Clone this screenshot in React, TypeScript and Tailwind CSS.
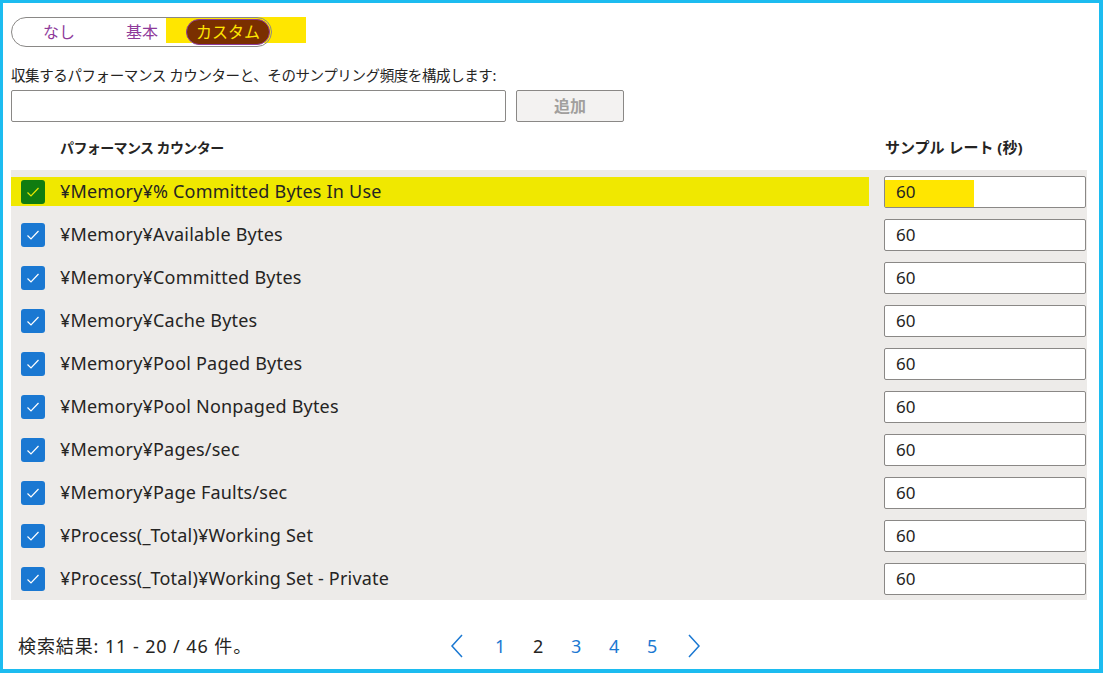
import { useState } from 'react';

const counters = [
  '¥Memory¥% Committed Bytes In Use',
  '¥Memory¥Available Bytes',
  '¥Memory¥Committed Bytes',
  '¥Memory¥Cache Bytes',
  '¥Memory¥Pool Paged Bytes',
  '¥Memory¥Pool Nonpaged Bytes',
  '¥Memory¥Pages/sec',
  '¥Memory¥Page Faults/sec',
  '¥Process(_Total)¥Working Set',
  '¥Process(_Total)¥Working Set - Private',
];

function Check({ highlight }: { highlight?: boolean }) {
  return (
    <span
      className={
        'flex h-6 w-6 items-center justify-center rounded-[3px] ' +
        (highlight ? 'bg-[#107c10]' : 'bg-[#1a78d2]')
      }
    >
      <svg width="16" height="16" viewBox="0 0 16 16" fill="none">
        <path
          d="M2.5 8.5 L6 12 L13.5 4"
          stroke={highlight ? '#e8e800' : '#ffffff'}
          strokeWidth="1.2"
        />
      </svg>
    </span>
  );
}

export default function App() {
  const [mode, setMode] = useState('custom');

  return (
    <div className="h-[673px] w-[1103px] border-[4px] border-l-[3px] border-t-[3px] border-[#1cbcf0] bg-white font-['Noto_Sans','Noto_Sans_CJK_JP',sans-serif] text-[#252423]">
      <div className="px-2 pt-[14px]">
        <div className="relative">
          {/* highlight marker behind the selected option */}
          <div className="absolute left-[155px] top-0 h-[26px] w-[140px] bg-[#ffe600]" />
          <div className="relative flex h-[30px] w-[261px] items-center rounded-full border border-[#8a8886] pr-[1px] text-[16px] text-[#8e3a9a]">
            <button onClick={() => setMode('none')} className="w-[94px] text-center">
              なし
            </button>
            <button onClick={() => setMode('basic')} className="w-[72px] text-center">
              基本
            </button>
            <button
              onClick={() => setMode('custom')}
              className={
                'ml-[8px] h-[26px] w-[84px] rounded-full border border-[#8e3a9a] text-center ' +
                (mode === 'custom' ? 'bg-[#7a2f00] text-[#ffe600]' : '')
              }
            >
              カスタム
            </button>
          </div>
        </div>

        <p className="mt-[18px] text-[14.5px] leading-[20px] tracking-[-0.4px]">
          収集するパフォーマンス カウンターと、そのサンプリング頻度を構成します:
        </p>
        <div className="mt-[5px] flex gap-[10px]">
          <input className="h-[32px] w-[495px] rounded-[2px] border border-[#8a8886] px-2 outline-none" />
          <button className="h-[32px] w-[108px] rounded-[2px] border border-[#8a8886] bg-[#f3f2f1] text-[16px] font-bold text-[#a19f9d]">
            追加
          </button>
        </div>

        <div className="flex h-[48px] items-center pt-[2px] font-bold">
          <span className="ml-[49px] flex-1 text-[14px] tracking-[-0.6px]">パフォーマンス カウンター</span>
          <span className="w-[206px] text-[15px]">サンプル レート (秒)</span>
        </div>

        <div className="mr-[4px] bg-[#edebe9]">
          {counters.map((c, i) => (
            <div key={c} className="flex h-[43px] items-center pr-[1px]">
              <div
                className={
                  'flex h-[29px] flex-1 items-center ' + (i === 0 ? 'mr-[15px] bg-[#f0e800]' : '')
                }
              >
                <span className="ml-[10px]">
                  <Check highlight={i === 0} />
                </span>
                <span className="ml-[15px] text-[18px] tracking-[0.2px]">{c}</span>
              </div>
              <div className="relative h-[32px] w-[202px] rounded-[2px] border border-[#8a8886] bg-white">
                {i === 0 && <div className="absolute left-0 top-[3px] h-[27px] w-[89px] bg-[#ffe600]" />}
                <span className="relative pl-[11px] text-[17px] leading-[30px]">60</span>
              </div>
            </div>
          ))}
        </div>

        <div className="mt-[34px] flex h-[24px] items-center">
          <span className="ml-[7px] w-[431px] text-[18px] tracking-[0.9px]">検索結果: 11 - 20 / 46 件。</span>
          <div className="flex items-center text-[18px] text-[#1a78d2]">
            <svg width="16" height="24" viewBox="0 0 16 24" fill="none" className="mr-[30px]">
              <path d="M13 1 L3 12 L13 23" stroke="#1a78d2" strokeWidth="1.5" />
            </svg>
            <span className="w-[38px]">1</span>
            <span className="w-[38px] text-[#252423]">2</span>
            <span className="w-[38px]">3</span>
            <span className="w-[38px]">4</span>
            <span className="w-[39px]">5</span>
            <svg width="16" height="24" viewBox="0 0 16 24" fill="none">
              <path d="M3 1 L13 12 L3 23" stroke="#1a78d2" strokeWidth="1.5" />
            </svg>
          </div>
        </div>
      </div>
    </div>
  );
}
